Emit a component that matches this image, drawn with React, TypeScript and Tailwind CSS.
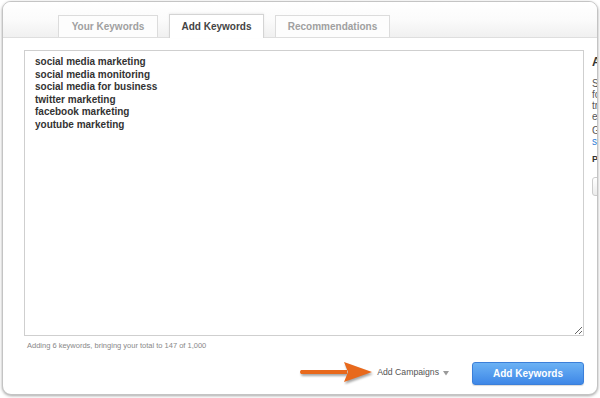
import React from "react";

const keywords = [
  "social media marketing",
  "social media monitoring",
  "social media for business",
  "twitter marketing",
  "facebook marketing",
  "youtube marketing",
];

const font = { fontFamily: '"Liberation Sans", Arial, sans-serif' };

const Tab = ({ label, active, width }: { label: string; active?: boolean; width: string }) => (
  <div
    className={`${width} flex items-center justify-center border border-b-0 text-[10px] font-bold ${
      active
        ? "relative z-10 -mb-px h-[24px] border-[#d4d4d4] bg-white text-[#444] shadow-[0_-1px_2px_rgba(0,0,0,0.06)]"
        : "h-[22px] border-[#dcdcdc] bg-[#fdfdfd] text-[#a0a0a0]"
    }`}
  >
    {label}
  </div>
);

export default function App() {
  return (
    <div className="h-[398px] w-[600px] bg-white pl-[2px] pt-[1px]" style={font}>
      <div className="h-[394px] w-[596px] overflow-hidden rounded-[9px] border border-[#c4c4c4] bg-white shadow-[0_1px_3px_rgba(0,0,0,0.35)]">
        {/* tab strip */}
        <div className="flex h-[36px] items-end border-b border-[#dedede] bg-gradient-to-b from-white via-[#fbfbfb] to-[#f0f0f0] pl-[55px]">
          <Tab label="Your Keywords" width="w-[100px]" />
          <div className="ml-[11px]">
            <Tab label="Add Keywords" width="w-[95px]" active />
          </div>
          <div className="ml-[11px]">
            <Tab label="Recommendations" width="w-[115px]" />
          </div>
        </div>

        <div className="flex gap-[8px] pl-[21px] pt-[12px]">
          <div className="w-[560px] shrink-0">
            <textarea
              readOnly
              value={keywords.join("\n")}
              className="block h-[286px] w-[560px] resize border border-[#cfcfcf] bg-white px-[10px] pt-[5px] text-[10px] font-bold leading-[12.5px] text-[#333] outline-none"
              style={font}
            />
            <div className="ml-[3px] mt-[5px] text-[7.5px] leading-[9px] text-[#888888]">
              Adding 6 keywords, bringing your total to 147 of 1,000
            </div>
            <div className="mt-[11px] flex items-center justify-end">
              <svg width="74" height="24" viewBox="0 0 74 24" className="drop-shadow-[1px_2px_1px_rgba(0,0,0,0.35)]">
                <path d="M2 9 L48 9 L48 13 L2 13 Q0 11 2 9 Z" fill="#e8691c" />
                <path d="M45 1 L73 11 L45 21 L49 11 Z" fill="#e8691c" />
              </svg>
              <span className="ml-[4px] text-[8.7px] text-[#555]">Add Campaigns</span>
              <svg width="6" height="5" viewBox="0 0 6 5" className="ml-[4px]">
                <path d="M0 0 H6 L3 4.5 Z" fill="#9a9a9a" />
              </svg>
              <button className="ml-[23px] h-[23px] w-[112px] rounded-[3px] border border-[#3b7fd9] bg-gradient-to-b from-[#6cb2f4] to-[#3e87e7] text-[10px] font-bold text-white shadow-[0_1px_1px_rgba(0,0,0,0.15)]">
                Add Keywords
              </button>
            </div>
          </div>

          {/* side panel, mostly cut off by the frame */}
          <div className="w-[200px] shrink-0 pt-[5px] text-[10px] text-[#555]">
            <div className="text-[12px] font-bold leading-[14px] text-[#333]">About keywords</div>
            <div className="mt-[9px] leading-[11px]">
              <div>Start typing</div>
              <div>for each</div>
              <div>track, one per</div>
              <div>entry.</div>
            </div>
            <div className="mt-[3px] leading-[11px]">Get ideas</div>
            <div className="leading-[11px] text-[#2a7bd6]">see suggestions</div>
            <div className="mt-[7px] text-[9px] font-bold leading-[11px] text-[#333]">Paste from</div>
            <div className="mt-[12px] h-[19px] w-[60px] rounded-[3px] border border-[#ccc] bg-gradient-to-b from-white to-[#ececec]" />
          </div>
        </div>
      </div>
    </div>
  );
}
